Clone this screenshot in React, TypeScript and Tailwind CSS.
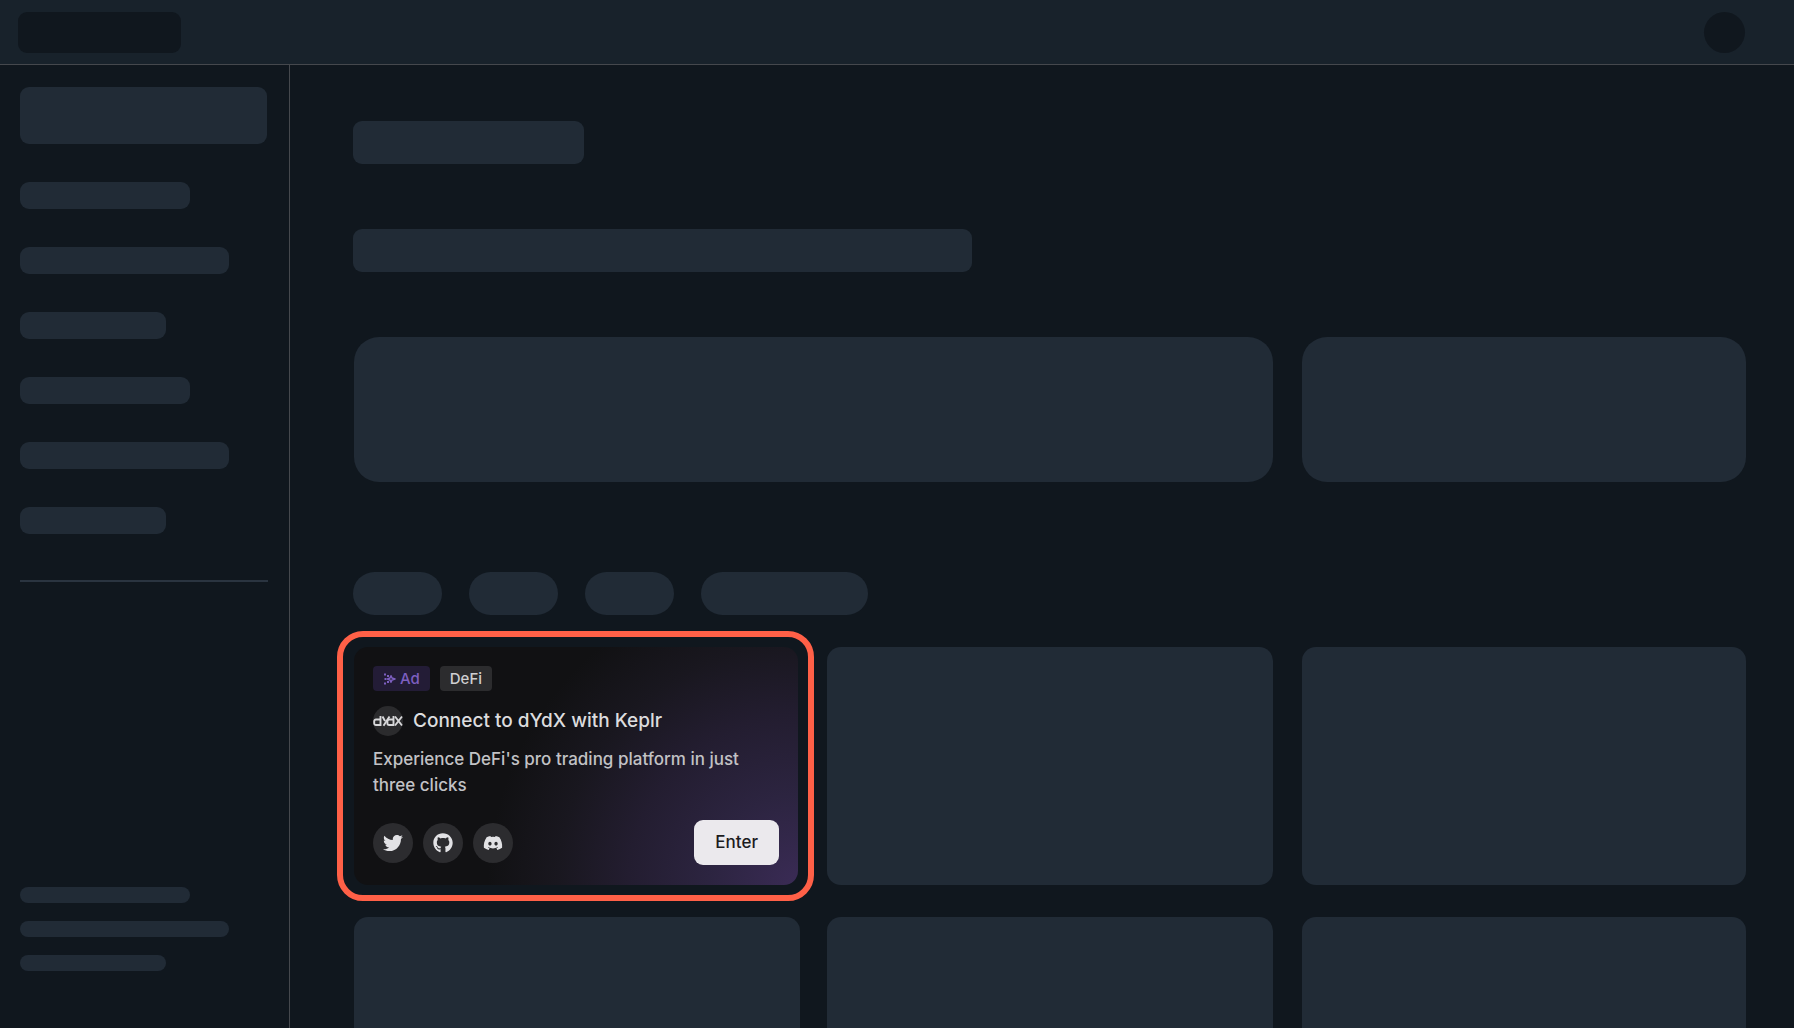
import { FaTwitter, FaGithub, FaDiscord } from "react-icons/fa";

function Bar({ className }: { className: string }) {
  return <div className={`bg-[#212b36] ${className}`} />;
}

function SparkIcon() {
  return (
    <svg viewBox="0 0 13 12" className="h-3 w-[13px]" fill="none" stroke="currentColor" aria-hidden="true">
      <path d="M8 2.800 9 5l3 1-3 1-1 2.200L7 7 4.500 6 7 5Z" strokeWidth="1.500" strokeLinejoin="round" />
      <path d="M1 1.500h2M4 3h2M1.500 6h2M4 9h2M1 10.500h2" strokeWidth="2" />
    </svg>
  );
}

function DydxLogo() {
  return (
    <span className="flex size-[30px] items-center justify-center rounded-full bg-[#2b2b2d]">
      <svg viewBox="0 0 30 12" className="h-3 w-[30px]" fill="none" stroke="#d8d8da" strokeWidth="1.900" role="img" aria-label="dYdX">
        <path d="M7.500 1v9H3a1.800 1.800 0 0 1-1.800-1.800V6.300A1.800 1.800 0 0 1 3 4.500h4.500" />
        <path d="M9.500 1.500 12 6M16.500 1.500 10.500 10.800" />
        <path d="M20.500 1v9h-4.300a1.800 1.800 0 0 1-1.800-1.800V6.300a1.800 1.800 0 0 1 1.800-1.800h4.300" />
        <path d="m22 1.500 7 9M29 1.500l-7 9" />
      </svg>
    </span>
  );
}

const socials = [
  { label: "Twitter", Icon: FaTwitter },
  { label: "GitHub", Icon: FaGithub },
  { label: "Discord", Icon: FaDiscord },
];

function AdCard() {
  return (
    <div className="relative h-[238px]">
      <article className="mr-0.5 flex h-full flex-col rounded-[14px] bg-[#111113] bg-[radial-gradient(circle_at_100%_100%,#3a2b55_0px,#2c2440_90px,#231d30_170px,#19171f_240px,#111113_310px)] px-[19px] pt-[19px] pb-5 text-[#dcdcde]">
        <div className="flex gap-2.5 text-[15px] font-medium leading-[25px]">
          <span className="flex items-center gap-1 rounded bg-[#231c36] px-2.5 text-[#7d5fc0]">
            <SparkIcon />
            Ad
          </span>
          <span className="rounded bg-[#2c2c2e] px-2.5 text-[#cfcfd1]">DeFi</span>
        </div>
        <div className="mt-[15px] flex items-center gap-2.5">
          <DydxLogo />
          <h2 className="text-[19px] font-medium leading-[30px]">Connect to dYdX with Keplr</h2>
        </div>
        <p className="mt-[10px] text-[17px] font-medium leading-[26px] text-[#c2c2c5]">
          Experience DeFi's pro trading platform in just three clicks
        </p>
        <div className="mt-auto flex items-center justify-between">
          <div className="flex gap-2.5">
            {socials.map(({ label, Icon }) => (
              <a key={label} href="#" aria-label={label} className="flex size-10 items-center justify-center rounded-full bg-[#2c2c2f] text-[#e2e2e5]">
                <Icon className="size-5" />
              </a>
            ))}
          </div>
          <button type="button" className="h-[45px] rounded-[9px] bg-[#ebe9ed] px-[21px] text-[17px] font-medium text-[#1c1c1e]">
            Enter
          </button>
        </div>
      </article>
      <div className="pointer-events-none absolute -top-4 -right-3.5 -bottom-4 -left-[17px] rounded-[26px] border-6 border-[#ff6047]" />
    </div>
  );
}

export default function App() {
  return (
    <div className="flex h-screen flex-col overflow-hidden bg-[#10171e] font-['Inter',sans-serif]">
      <header className="flex h-[65px] shrink-0 items-center justify-between border-b border-[#45484d] bg-[#18222b] pr-[49px] pl-[18px]">
        <div className="h-[41px] w-[163px] rounded-[9px] bg-[#10171e]" />
        <div className="size-[41px] rounded-full bg-[#10171e]" />
      </header>
      <div className="flex min-h-0 flex-1">
        <aside className="flex w-[290px] shrink-0 flex-col border-r border-[#45484d] pt-[22px] pr-[21px] pb-[57px] pl-5">
          <div className="flex flex-col gap-[38px]">
            <Bar className="mr-px h-[57px] rounded-[9px]" />
            <Bar className="h-[27px] w-[170px] rounded-[9px]" />
            <Bar className="h-[27px] w-[209px] rounded-[9px]" />
            <Bar className="h-[27px] w-[146px] rounded-[9px]" />
            <Bar className="h-[27px] w-[170px] rounded-[9px]" />
            <Bar className="h-[27px] w-[209px] rounded-[9px]" />
            <Bar className="h-[27px] w-[146px] rounded-[9px]" />
          </div>
          <hr className="mt-[46px] border-t-2 border-[#2a3440]" />
          <div className="mt-auto flex flex-col gap-[18px]">
            <Bar className="h-4 w-[170px] rounded-full" />
            <Bar className="h-4 w-[209px] rounded-full" />
            <Bar className="h-4 w-[146px] rounded-full" />
          </div>
        </aside>
        <main className="min-w-0 flex-1 overflow-hidden pt-14 pr-12 pl-16">
          <div className="-ml-px">
            <Bar className="h-[43px] w-[231px] rounded-[9px]" />
            <Bar className="mt-[65px] h-[43px] w-[619px] rounded-[9px]" />
          </div>
          <div className="mt-[65px] grid grid-cols-[919fr_444fr] gap-[29px]">
            <Bar className="h-[145px] rounded-[25px]" />
            <Bar className="h-[145px] rounded-[25px]" />
          </div>
          <div className="mt-[90px] -ml-px flex gap-[27px]">
            <Bar className="h-[43px] w-[89px] rounded-full" />
            <Bar className="h-[43px] w-[89px] rounded-full" />
            <Bar className="h-[43px] w-[89px] rounded-full" />
            <Bar className="h-[43px] w-[167px] rounded-full" />
          </div>
          <div className="mt-8 grid grid-cols-[919fr_444fr] gap-x-[29px] gap-y-8">
            <div className="grid grid-cols-2 gap-[27px]">
              <AdCard />
              <Bar className="h-[238px] rounded-[14px]" />
            </div>
            <Bar className="h-[238px] rounded-[14px]" />
            <div className="grid grid-cols-2 gap-[27px]">
              <Bar className="h-[238px] rounded-[14px]" />
              <Bar className="h-[238px] rounded-[14px]" />
            </div>
            <Bar className="h-[238px] rounded-[14px]" />
          </div>
        </main>
      </div>
    </div>
  );
}
